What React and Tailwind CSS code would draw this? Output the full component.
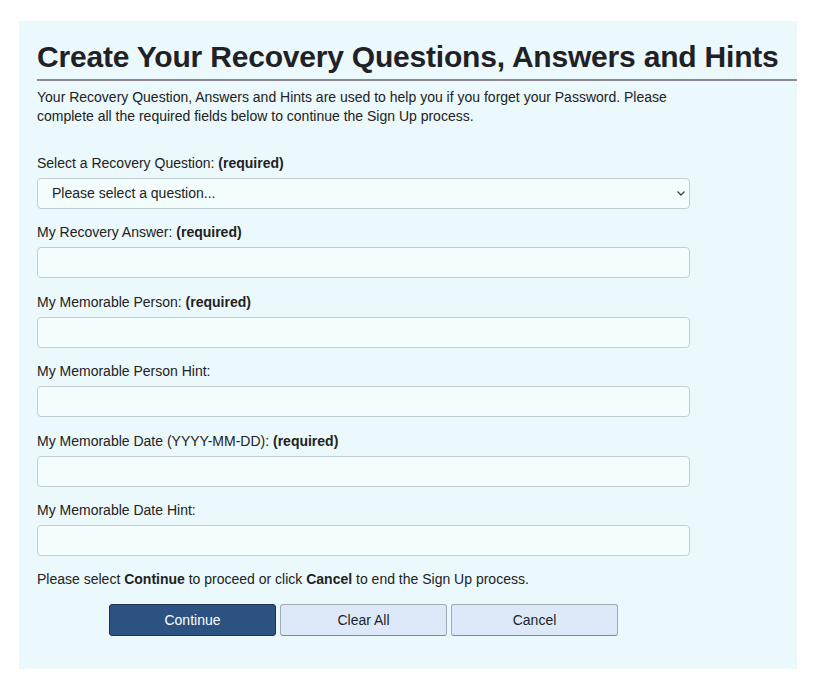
import React from "react";

const font = { fontFamily: '"Liberation Sans", Arial, sans-serif' };

function Field({ label, required, className = "", children }) {
  return (
    <div className={"flex flex-col " + className}>
      <label className="text-[14px] leading-[20px] text-[#222] mb-[5px]">
        {label}
        {required && <b className="font-bold"> (required)</b>}
      </label>
      {children}
    </div>
  );
}

function TextInput() {
  return (
    <input
      type="text"
      className="h-[31px] w-[653px] rounded-[4px] border border-[#c3ced2] bg-[#f3fdfd] px-3 text-[14px] outline-none"
    />
  );
}

export default function App() {
  return (
    <div className="w-[816px] h-[692px] bg-white pt-[21px] pl-[19px]" style={font}>
      <div className="w-[778px] bg-[#ebf8fc] pl-[18px] pt-[18px] pb-[33px]">
        <h1 className="text-[30px] leading-[36px] font-bold text-[#1f2124] tracking-[-0.2px] pb-[4px] border-b-2 border-[#8b8891] whitespace-nowrap">
          Create Your Recovery Questions, Answers and Hints
        </h1>
        <p className="mt-[7px] text-[14px] leading-[19px] text-[#222]">
          Your Recovery Question, Answers and Hints are used to help you if you forget your Password. Please
          <br />
          complete all the required fields below to continue the Sign Up process.
        </p>

        <div className="mt-[27px] flex flex-col">
          <Field label="Select a Recovery Question:" required>
            <div className="relative h-[31px] w-[653px] rounded-[4px] border border-[#c3ced2] bg-[#f3fdfd] flex items-center pl-[14px] text-[14px] text-[#222]">
              Please select a question...
              <svg
                className="absolute right-[3px] top-[11px]"
                width="10"
                height="7"
                viewBox="0 0 10 7"
                fill="none"
              >
                <path d="M1.5 1.5 L5 5 L8.5 1.5" stroke="#444" strokeWidth="1.3" />
              </svg>
            </div>
          </Field>
          <Field label="My Recovery Answer:" required className="mt-[13px]">
            <TextInput />
          </Field>
          <Field label="My Memorable Person:" required className="mt-[14px]">
            <TextInput />
          </Field>
          <Field label="My Memorable Person Hint:" className="mt-[13px]">
            <TextInput />
          </Field>
          <Field label="My Memorable Date (YYYY-MM-DD):" required className="mt-[14px]">
            <TextInput />
          </Field>
          <Field label="My Memorable Date Hint:" className="mt-[13px]">
            <TextInput />
          </Field>
        </div>

        <p className="mt-[14px] text-[14px] leading-[19px] text-[#222]">
          Please select <b>Continue</b> to proceed or click <b>Cancel</b> to end the Sign Up process.
        </p>

        <div className="mt-[15px] w-[653px] flex justify-center gap-[4px]">
          <button className="h-[32px] w-[167px] rounded-[3px] border border-[#1d3250] bg-[#2c5282] text-white text-[14px]">
            Continue
          </button>
          <button className="h-[32px] w-[167px] rounded-[3px] border border-[#a3abb4] border-b-[#7f8893] bg-[#dde9f8] text-[#1b1f2a] text-[14px]">
            Clear All
          </button>
          <button className="h-[32px] w-[167px] rounded-[3px] border border-[#a3abb4] border-b-[#7f8893] bg-[#dde9f8] text-[#1b1f2a] text-[14px]">
            Cancel
          </button>
        </div>
      </div>
    </div>
  );
}
